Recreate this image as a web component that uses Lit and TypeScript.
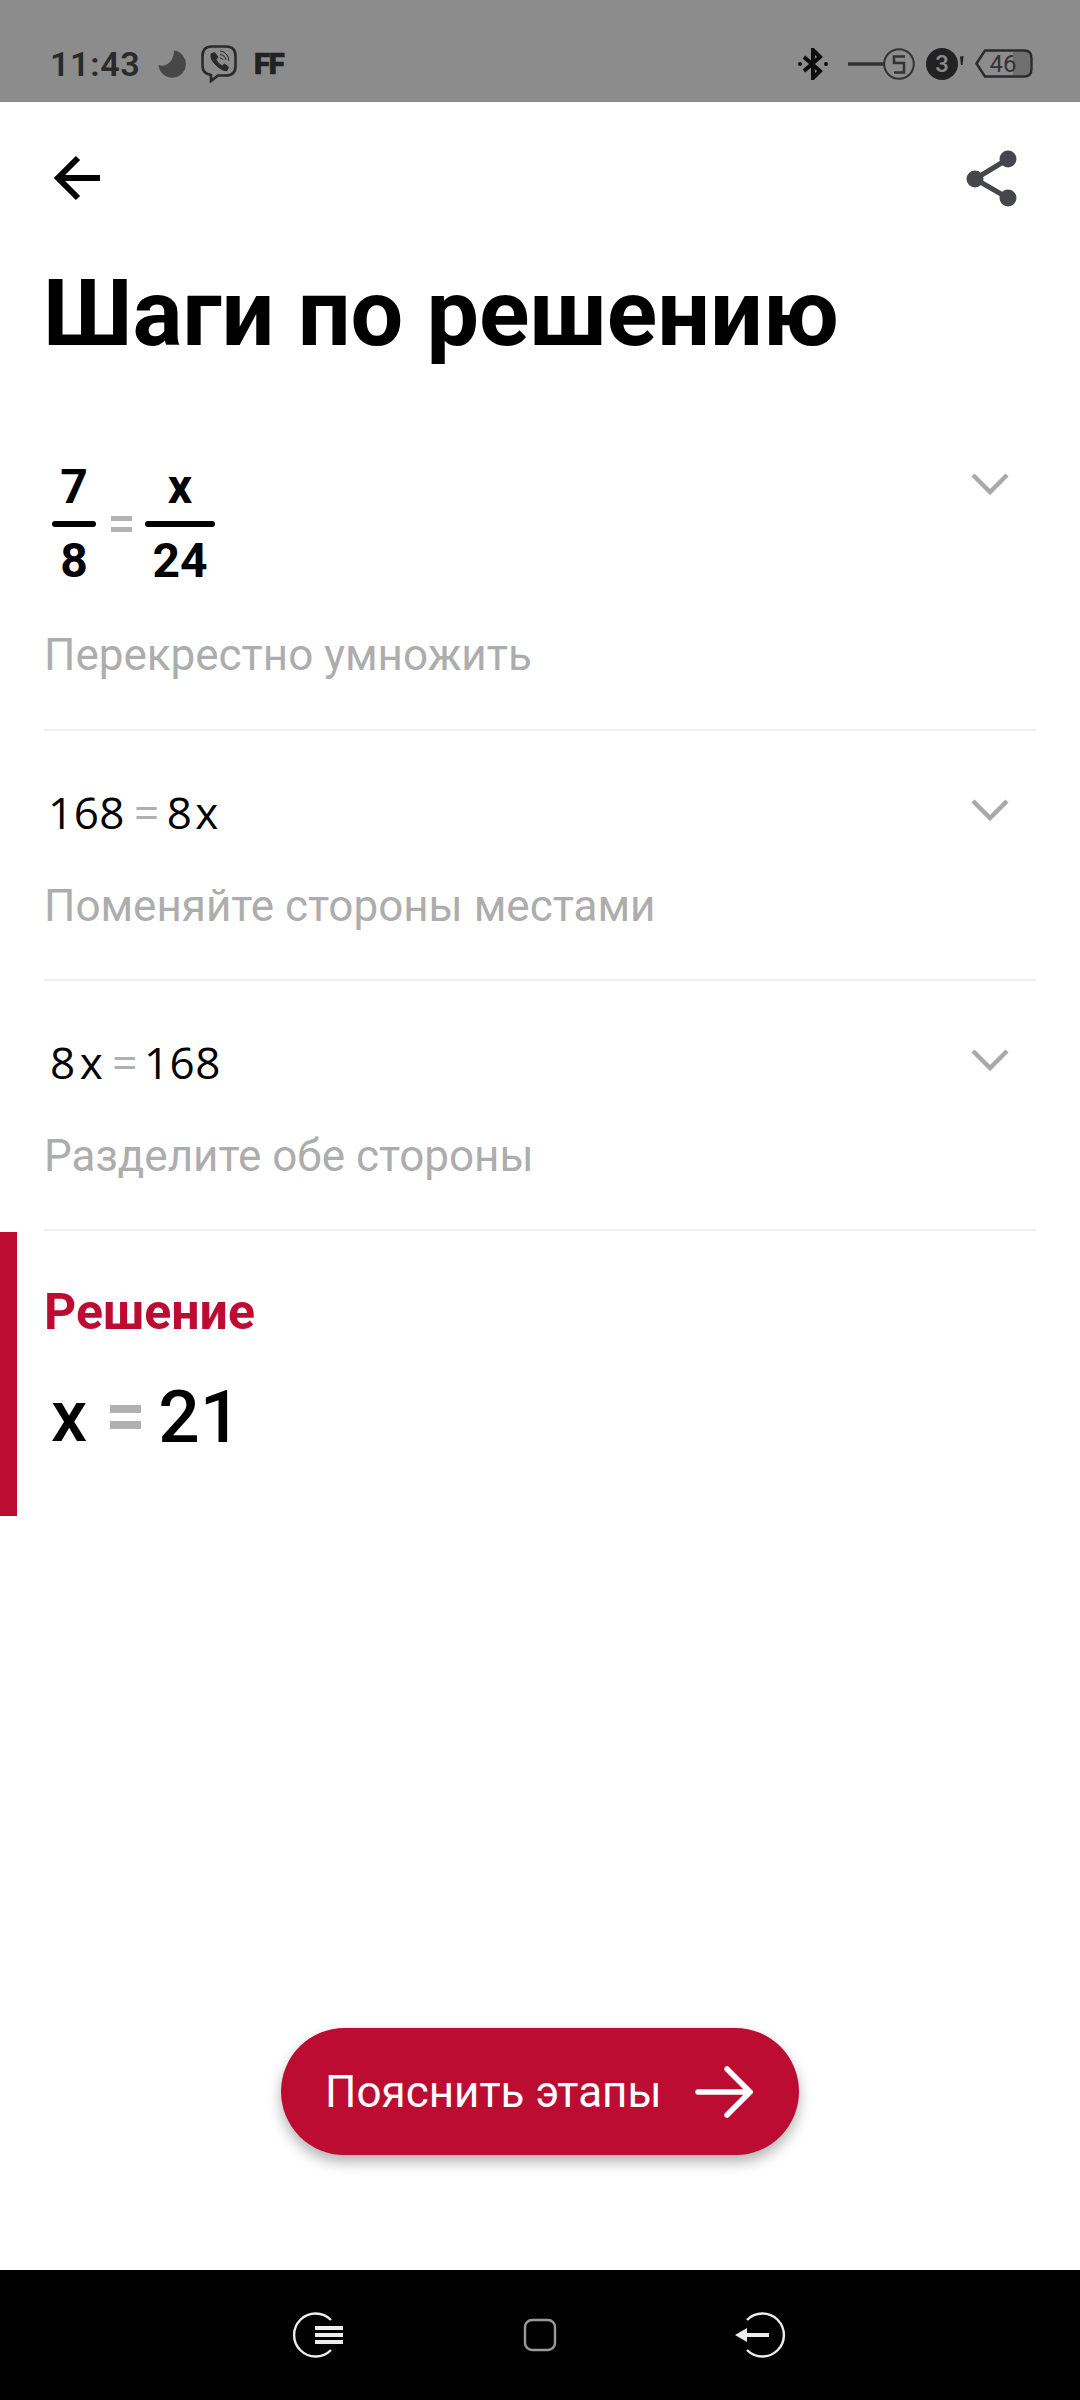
import { LitElement, html, css } from "lit";
import { customElement } from "lit/decorators.js";

const chevron = html`<svg class="chev" width="38" height="24" viewBox="0 0 38 24"><path d="M2 3 L19 20 L36 3" fill="none" stroke="#a9a9a9" stroke-width="4.5"/></svg>`;

@customElement("app-root")
export class AppRoot extends LitElement {
  static styles = css`
    :host { display: block; width: 1080px; height: 2400px; font-family: Roboto, "Liberation Sans", sans-serif; background: #fff; color: #000; }
    .page { display: flex; flex-direction: column; height: 2400px; }
    .status { height: 102px; flex: none; background: #8c8c8c; display: flex; align-items: center; padding: 26px 47px 0 50px; box-sizing: border-box; border-bottom: 1px solid #888; }
    .status svg { display: block; flex: none; }
    .time { font-size: 34px; font-weight: 600; color: #2a2a2a; letter-spacing: 0.7px; width: 108px; }
    .ff { font-size: 29px; font-weight: 900; color: #222; margin-left: 17px; width: 30px; letter-spacing: -1px; -webkit-text-stroke: 0.7px #222; }
    .moon { margin-right: 15px; }
    .spacer { flex: 1; }
    .sim2 { margin-left: 11px; }
    .batt { margin-left: 11px; }
    .sim1 { margin-left: 20px; }
    main { flex: 1; display: flex; flex-direction: column; min-height: 0; }
    .top { height: 152px; flex: none; display: flex; align-items: center; justify-content: space-between; padding: 0 62px 0 54px; }
    h1 { margin: 0; font-size: 93.4px; line-height: 118px; font-weight: 700; padding-left: 43px; }
    .steps { margin-top: 59px; }
    .row { margin: 0 44px; border-bottom: 2px solid #f0f0f0; height: 250px; box-sizing: border-box; padding: 51px 27px 0 0; display: grid; grid-template-columns: 1fr auto; align-content: start; }
    .row.first { height: 300px; padding-top: 28px; }
    .chev { margin-top: 16px; }
    .row.first .chev { margin-top: 13px; }
    .math { font-family: "Open Sans", "Noto Sans", sans-serif; font-size: 44px; line-height: 60px; height: 60px; display: flex; align-items: center; padding-left: 4px; letter-spacing: 0.5px; }
    .math.m3 { padding-left: 6px; }
    .x { margin-left: 3px; }
    .m3 .x { margin-left: 4px; }
    .eq { color: #b0b0b0; margin: 0 7px 0 9px; }
    .m3 .eq { margin: 0 6px 0 9px; }
    .desc { grid-column: 1 / -1; font-size: 44px; line-height: 50px; color: #adadad; margin-top: 41px; }
    .row:not(.first) .desc { margin-top: 39px; }
    .frac-line { display: flex; align-items: center; font-weight: 700; font-size: 48px; height: 130px; padding-left: 8px; }
    .frac { display: flex; flex-direction: column; align-items: center; }
    .frac span { line-height: 56px; height: 56px; }
    .frac i { display: block; height: 6px; border-radius: 3px; background: #000; margin: 6px 0; }
    .f1 i { width: 44px; }
    .f2 i { width: 70px; }
    .bigeq { width: 21px; height: 16px; margin: 0 13px 0 15px; border-top: 5px solid #b4b4b4; border-bottom: 5px solid #b4b4b4; box-sizing: border-box; }
    .solution { margin-top: 1px; border-left: 17px solid #bd0c32; height: 284px; box-sizing: border-box; padding: 50px 0 0 27px; }
    .solution h2 { margin: 0; color: #bd0c32; font-size: 50px; line-height: 60px; font-weight: 700; }
    .answer { margin-top: 33px; display: flex; align-items: center; font-size: 73px; line-height: 84px; padding-left: 7px; font-weight: 500; }
    .answer b { font-size: 72px; font-weight: 500; }
    .answer em { font-style: normal; width: 31px; height: 24px; border-top: 8px solid #b0b0b0; border-bottom: 8px solid #b0b0b0; box-sizing: border-box; margin: 0 17px 0 23px; }
    .btn { margin: auto auto 115px; width: 518px; height: 127px; border-radius: 64px; background: #bd0c32; box-shadow: 0 7px 14px rgba(0,0,0,0.3); color: #fff; display: flex; align-items: center; padding-left: 44px; box-sizing: border-box; font-size: 44px; flex: none; gap: 33px; }
    nav { height: 130px; flex: none; background: #000; display: flex; align-items: center; justify-content: center; gap: 178px; }
    nav svg { display: block; }
  `;

  render() {
    return html`<div class="page">
      <div class="status">
        <span class="time">11:43</span>
        <svg class="moon" width="28" height="28" viewBox="0 0 28 28"><path d="M16 0.5 A13.7 13.7 0 1 1 0.5 15 C8 18 16 11 16 0.5Z" fill="#474747"/></svg>
        <svg width="36" height="38" viewBox="0 0 36 38" fill="none" stroke="#2a2a2a"><path d="M11 1.5 H25 Q34.5 1.5 34.5 11 V21 Q34.5 30.5 25 30.5 H17 L10 36 V30 Q1.5 28.5 1.5 21 V11 Q1.5 1.5 11 1.5Z" stroke-width="2.6"/><path d="M10 9 L13.5 7.5 L17 12 L15 14.5 Q17 19 21 21 L23.5 19 L27.5 22 L26 25.5 Q22 26.5 16 21 Q9 15 10 9Z" fill="#2a2a2a" stroke-width="1"/><path d="M19 6 Q27 7 28 16 M19 9.5 Q24 10 25 15 M19 13 Q21.5 13 22 15" stroke-width="1"/></svg>
        <span class="ff">FF</span>
        <span class="spacer"></span>
        <svg width="30" height="32" viewBox="0 0 30 32" fill="none"><path d="M6 9 L22 23 L15 30 V2 L22 9 L6 23" stroke="#0c0c0c" stroke-width="4"/><circle cx="2" cy="16" r="2" fill="#0c0c0c"/><circle cx="28" cy="16" r="2" fill="#0c0c0c"/></svg>
        <svg class="sim1" width="67" height="32" viewBox="0 0 67 32" fill="none"><path d="M0 16 H36" stroke="#333" stroke-width="3.6"/><circle cx="51" cy="16" r="14.8" stroke="#333" stroke-width="2"/><path d="M57 8.5 H46 V15 H56 V24.5 H46" stroke="#333" stroke-width="2.6"/></svg>
        <svg class="sim2" width="38" height="32" viewBox="0 0 38 32"><circle cx="16" cy="16" r="16" fill="#222"/><text x="16" y="24" text-anchor="middle" font-family="Roboto" font-size="24" fill="#8c8c8c" font-weight="500">3</text><path d="M34 8.5 L37.5 8 L36.5 17 L35 17Z" fill="#222"/></svg>
        <svg class="batt" width="58" height="29" viewBox="0 0 58 29" fill="none"><path d="M38 3 H50 Q55 3 55 8 V21 Q55 26 50 26 H38Z" fill="#6f6f6f"/><path d="M10 1.5 H49 Q56.5 1.5 56.5 9 V20 Q56.5 27.5 49 27.5 H10 L1.5 14.5Z" stroke="#2a2a2a" stroke-width="2.4" stroke-linejoin="round"/><text x="28" y="23" text-anchor="middle" font-family="Roboto" font-size="24" fill="#333">46</text></svg>
      </div>
      <main>
        <div class="top">
          <svg width="46" height="46" viewBox="0 0 46 46" fill="none" stroke="#000" stroke-width="6"><path d="M24 3 L4 23 L24 43 M4 23 H46"/></svg>
          <svg width="52" height="58" viewBox="0 0 52 58" fill="#45474d"><circle cx="42" cy="10" r="8.5"/><circle cx="9" cy="30" r="8.5"/><circle cx="42" cy="49" r="8.5"/><path d="M42 10 L9 30 L42 49" fill="none" stroke="#45474d" stroke-width="5"/></svg>
        </div>
        <h1>Шаги по решению</h1>
        <div class="steps">
          <div class="row first">
            <div class="frac-line">
              <div class="frac f1"><span>7</span><i></i><span>8</span></div>
              <div class="bigeq"></div>
              <div class="frac f2"><span>x</span><i></i><span>24</span></div>
            </div>
            ${chevron}
            <div class="desc">Перекрестно умножить</div>
          </div>
          <div class="row">
            <div class="math"><span>168</span><span class="eq">=</span><span>8</span><span class="x">x</span></div>
            ${chevron}
            <div class="desc">Поменяйте стороны местами</div>
          </div>
          <div class="row">
            <div class="math m3"><span>8</span><span class="x">x</span><span class="eq">=</span><span>168</span></div>
            ${chevron}
            <div class="desc">Разделите обе стороны</div>
          </div>
        </div>
        <section class="solution">
          <h2>Решение</h2>
          <div class="answer"><b>x</b><em></em>21</div>
        </section>
        <div class="btn">Пояснить этапы
          <svg width="58" height="52" viewBox="0 0 58 52" fill="none" stroke="#fff" stroke-width="5.5" stroke-linecap="round"><path d="M3 26 H54 M32 3 L55 26 L32 49"/></svg>
        </div>
      </main>
      <nav>
        <svg width="54" height="46" viewBox="0 0 54 46" fill="none" stroke="#eee" stroke-width="2.4"><path d="M40 8 A21.5 21.5 0 1 0 40 38"/><path d="M24 16 H52 M24 23 H52 M24 30 H52" stroke-width="4"/></svg>
        <svg width="34" height="34" viewBox="0 0 34 34" fill="none" stroke="#9a9a9a" stroke-width="2.4"><rect x="2" y="2" width="30" height="30" rx="7"/></svg>
        <svg width="54" height="46" viewBox="0 0 54 46" fill="none" stroke="#eee" stroke-width="2.4"><path d="M12 8 A21.5 21.5 0 1 1 12 38"/><path d="M8 23 H34" stroke-width="4"/><path d="M0 23 L12 16 V30Z" fill="#eee" stroke="none"/></svg>
      </nav>
    </div>`;
  }
}
